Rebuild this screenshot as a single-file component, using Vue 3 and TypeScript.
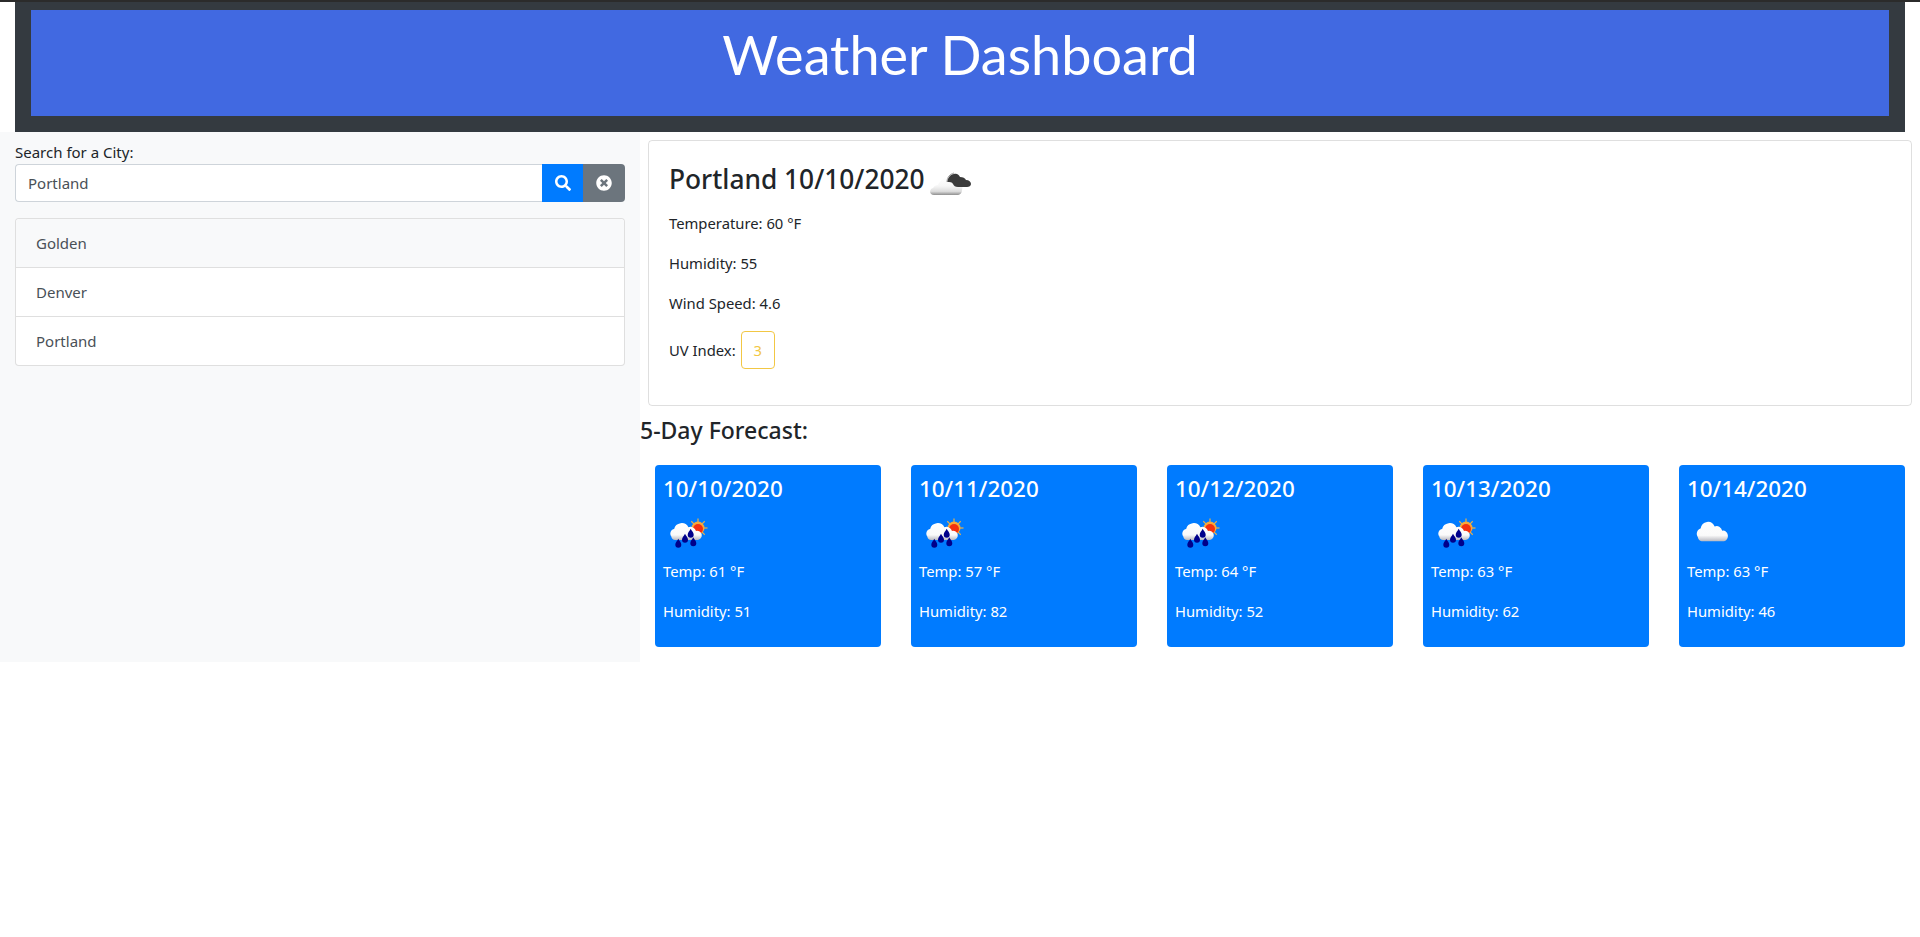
<script setup lang="ts">
interface Day { date: string; temp: number; humidity: number; kind: 'rain' | 'cloud' }
const cities: string[] = ['Golden', 'Denver', 'Portland']
const days: Day[] = [
  { date: '10/10/2020', temp: 61, humidity: 51, kind: 'rain' },
  { date: '10/11/2020', temp: 57, humidity: 82, kind: 'rain' },
  { date: '10/12/2020', temp: 64, humidity: 52, kind: 'rain' },
  { date: '10/13/2020', temp: 63, humidity: 62, kind: 'rain' },
  { date: '10/14/2020', temp: 63, humidity: 46, kind: 'cloud' },
]
const cloudPath = 'M4 20a5 5 0 0 1 3-8 8 8 0 0 1 15-2 6 6 0 0 1 8 4 5 5 0 0 1 2 10H8a5 5 0 0 1-4-4z'
const dropPath = 'M0-4C1-2 2.5-.8 2.5 1A2.5 2.5 0 0 1-2.5 1C-2.5-.8-1-2 0-4z'
const drops: [number, number][] = [[15.3, 33.5], [22, 28.5], [30.3, 32], [27.7, 23.5]]
const rays: number[] = [0, 45, 90, 135, 180, 225, 270, 315]
</script>

<template>
  <div class="page">
    <div class="strip"></div>
    <header class="jumbo">
      <h1 class="jumbo-title">Weather Dashboard</h1>
    </header>
    <div class="columns">
      <aside class="side">
        <label class="search-label" for="city">Search for a City:</label>
        <div class="input-group">
          <input id="city" class="city-input" type="text" value="Portland" />
          <button class="btn btn-blue" type="button" aria-label="Search">
            <svg class="btn-icon" viewBox="0 0 512 512"><path fill="#fff" d="M505 442.7L405.3 343c-4.5-4.5-10.6-7-17-7H372c27.6-35.3 44-79.7 44-128C416 93.1 322.9 0 208 0S0 93.1 0 208s93.1 208 208 208c48.3 0 92.7-16.4 128-44v16.3c0 6.4 2.5 12.5 7 17l99.7 99.7c9.4 9.4 24.6 9.4 33.9 0l28.3-28.3c9.4-9.4 9.4-24.6.1-34zM208 336c-70.7 0-128-57.2-128-128 0-70.7 57.2-128 128-128 70.7 0 128 57.2 128 128 0 70.7-57.2 128-128 128z"/></svg>
          </button>
          <button class="btn btn-grey" type="button" aria-label="Clear">
            <svg class="btn-icon" viewBox="0 0 512 512"><path fill="#fff" d="M256 8C119 8 8 119 8 256s111 248 248 248 248-111 248-248S393 8 256 8zm121.6 313.1c4.7 4.7 4.7 12.3 0 17L338 377.6c-4.7 4.7-12.3 4.7-17 0L256 312l-65.1 65.6c-4.7 4.7-12.3 4.7-17 0L134.4 338c-4.7-4.7-4.7-12.3 0-17l65.6-65-65.6-65.1c-4.7-4.7-4.7-12.3 0-17l39.6-39.6c4.7-4.7 12.3-4.7 17 0l65 65.7 65.1-65.6c4.7-4.7 12.3-4.7 17 0l39.6 39.6c4.7 4.7 4.7 12.3 0 17L312 256l65.6 65.1z"/></svg>
          </button>
        </div>
        <ul class="city-list">
          <li v-for="(c, i) in cities" :key="c" class="city-item" :class="{ hovered: i === 0 }">{{ c }}</li>
        </ul>
      </aside>

      <main class="content">
        <section class="today">
          <h3 class="today-title">
            <span class="today-name">Portland 10/10/2020</span>
            <svg class="today-icon" width="50" height="42" viewBox="0 0 50 42">
              <defs>
                <linearGradient id="lightCloud" x1="0" y1="0" x2="0" y2="1">
                  <stop offset="0" stop-color="#ffffff" />
                  <stop offset="0.5" stop-color="#f6f6f6" />
                  <stop offset="0.8" stop-color="#dcdcdc" />
                  <stop offset="1" stop-color="#8f8f8f" />
                </linearGradient>
              </defs>
              <path d="M7 34c-5 0-5-6-1-7 1-2 3-3 5-3 2-5 7-8 11-8 5 0 9 3 10 7 3 0 4 3 3 6 0 3-2 5-5 5z" fill="url(#lightCloud)" />
              <path d="M20 21c1-5 4-8 7-8 3-1 5 1 6 3 3 0 5 1 6 3 3 0 5 2 5 4 0 2-2 3-4 3H31c-3 0-4-1-5-3-1-2-3-2-6-2z" fill="#3a3a3a" />
              <path d="M20 21c0-5 3-8 7-9" fill="none" stroke="#a0a0a0" stroke-width="1" />
            </svg>
          </h3>
          <p class="stat">Temperature: 60 °F</p>
          <p class="stat">Humidity: 55</p>
          <p class="stat">Wind Speed: 4.6</p>
          <p class="stat uv">UV Index: <span class="uv-badge">3</span></p>
        </section>

        <h4 class="forecast-title">5-Day Forecast:</h4>
        <div class="forecast">
          <article v-for="d in days" :key="d.date" class="day">
            <h4 class="day-date">{{ d.date }}</h4>
            <svg class="day-icon" width="50" height="49" viewBox="0 0 50 49">
              <defs>
                <linearGradient :id="'c' + d.date" x1="0" y1="0" x2="0" y2="1">
                  <stop offset="0" stop-color="#ffffff" />
                  <stop offset="0.7" stop-color="#fafafa" />
                  <stop offset="1" stop-color="#b9b9c0" />
                </linearGradient>
              </defs>
              <template v-if="d.kind === 'rain'">
                <g transform="translate(35 18)">
                  <rect v-for="r in rays" :key="r" x="-0.6" y="-9.5" width="1.2" height="4" fill="#e8b04a" :transform="`rotate(${r})`" />
                  <circle r="6.5" fill="#f7a93a" />
                  <circle r="5" cy="1" fill="#f4300f" />
                </g>
                <path transform="translate(4.5 8) scale(.95 .92)" :d="cloudPath" :fill="`url(#c${d.date})`" />
                <path v-for="p in drops" :key="p[0]" :d="dropPath" :transform="`translate(${p[0]} ${p[1]}) scale(1.2)`" fill="#00008b" />
              </template>
              <path v-else transform="translate(7 6) scale(.94 1.05)" :d="cloudPath" :fill="`url(#c${d.date})`" />
            </svg>
            <p class="stat">Temp: {{ d.temp }} °F</p>
            <p class="stat">Humidity: {{ d.humidity }}</p>
          </article>
        </div>
      </main>
    </div>
  </div>
</template>

<style>
html, body { margin: 0; background: #fff; }
</style>

<style scoped>
.page {
  font-family: "Noto Sans", "Open Sans", sans-serif;
  font-size: 15px;
  line-height: 24px;
  color: #212529;
}
.strip { height: 2px; background: #2b2b2b; }
.jumbo {
  margin: 0 15px;
  padding: 8px 16px 16px;
  background: #343a40;
}
.jumbo-title {
  margin: 0;
  height: 106px;
  line-height: 90px;
  background: #4169e1;
  color: #fff;
  text-align: center;
  font-family: "Lato", sans-serif;
  font-size: 54px;
  font-weight: 400;
}
.columns { display: flex; }
.side {
  box-sizing: border-box;
  flex: 0 0 640px;
  padding: 8px 15px 0;
  background: #f8f9fa;
}
.search-label { display: block; }
.input-group { display: flex; height: 38px; margin-bottom: 16px; }
.city-input {
  box-sizing: border-box;
  flex: 1;
  min-width: 0;
  padding: 6px 12px;
  border: 1px solid #ced4da;
  border-right: 0;
  border-radius: 4px 0 0 4px;
  background: #fff;
  color: #495057;
  font: inherit;
  outline: none;
}
.btn {
  display: flex;
  align-items: center;
  justify-content: center;
  width: 41px;
  padding: 0;
  border: 0;
}
.btn-blue { background: #007bff; }
.btn-grey { width: 42px; background: #6c757d; border-radius: 0 4px 4px 0; }
.btn-icon { width: 16px; height: 16px; }
.city-list {
  margin: 0;
  padding: 0;
  list-style: none;
  border: 1px solid rgba(0, 0, 0, 0.125);
  border-radius: 4px;
  background: #fff;
  color: #495057;
}
.city-item { height: 48px; padding: 12px 20px; box-sizing: border-box; }
.city-item + .city-item { height: 49px; border-top: 1px solid rgba(0, 0, 0, 0.125); padding-top: 12px; }
.hovered { background: #f8f9fa; border-radius: 4px 4px 0 0; }
.content { flex: 1; min-width: 0; }
.today {
  margin: 8px;
  padding: 20px;
  border: 1px solid rgba(0, 0, 0, 0.125);
  border-radius: 4px;
  height: 266px;
  box-sizing: border-box;
}
.today-title {
  display: flex;
  gap: 2px;
  height: 42px;
  margin: 0 0 8px;
  font-size: 26.3px;
  font-weight: 500;
}
.today-name { line-height: 37px; }
.today-icon { flex: none; }
.stat { margin: 0 0 16px; font-size: 14.8px; }
.uv { display: flex; align-items: center; gap: 5px; margin-bottom: 0; }
.uv-badge {
  box-sizing: border-box;
  width: 34px;
  height: 38px;
  padding: 6px 0;
  border: 1px solid #f2c744;
  border-radius: 4px;
  color: #f2c744;
  text-align: center;
}
.forecast-title {
  margin: 0 0 20px;
  padding-top: 2px;
  font-size: 23px;
  font-weight: 500;
  line-height: 29px;
}
.forecast { display: flex; gap: 30px; padding: 0 15px 15px; }
.day {
  flex: 1;
  min-width: 0;
  height: 182px;
  box-sizing: border-box;
  padding: 8px;
  border-radius: 4px;
  background: #007bff;
  color: #fff;
}
.day-date { margin: 0 0 8px; padding-top: 1px; height: 28px; font-size: 22.4px; font-weight: 500; line-height: 29px; }
.day-icon { display: block; }
</style>
